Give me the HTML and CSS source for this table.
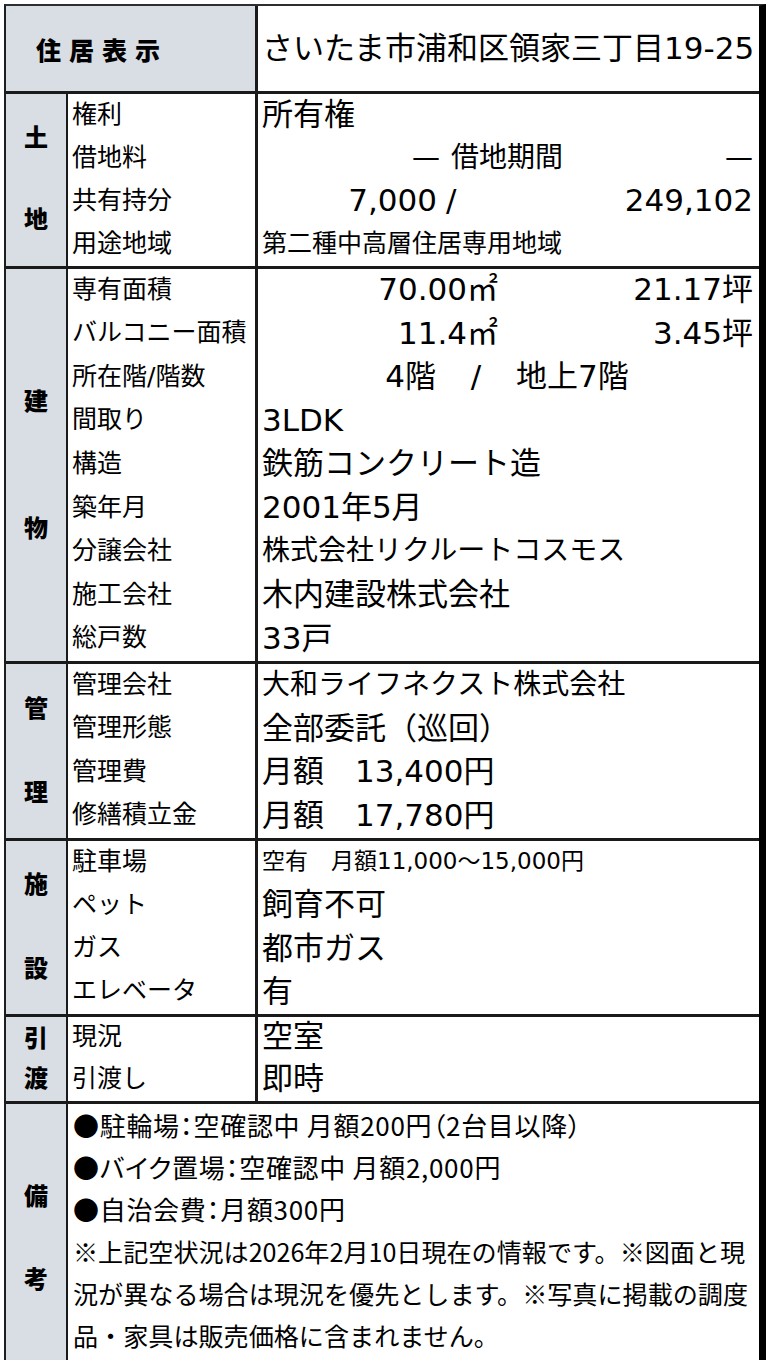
FILE: index.html
```html
<!DOCTYPE html>
<html lang="ja">
<head>
<meta charset="utf-8">
<title>物件概要</title>
<link rel="stylesheet" href="styles.css">
</head>
<body>
<div class="sheet">
  <div class="head">
    <div class="head-label">住居表示</div>
    <div class="head-value">さいたま市浦和区領家三丁目19-25</div>
  </div>

  <section class="sec sec-land">
    <div class="cat cat-land"><span>土</span><span>地</span></div>
    <div class="rows">
      <div class="row"><div class="lbl">権利</div><div class="val">所有権</div></div>
      <div class="row"><div class="lbl">借地料</div>
        <div class="val split split-lease"><span class="r">—</span><span class="lease-label">借地期間</span><span class="r">—</span></div>
      </div>
      <div class="row"><div class="lbl">共有持分</div>
        <div class="val split split-share"><span class="r">7,000</span><span class="slash">/</span><span class="r">249,102</span></div>
      </div>
      <div class="row"><div class="lbl">用途地域</div><div class="val val-s">第二種中高層住居専用地域</div></div>
    </div>
  </section>

  <section class="sec sec-bldg">
    <div class="cat cat-bldg"><span>建</span><span>物</span></div>
    <div class="rows">
      <div class="row"><div class="lbl">専有面積</div>
        <div class="val split split-area"><span class="r">70.00㎡</span><span class="r">21.17坪</span></div>
      </div>
      <div class="row"><div class="lbl">バルコニー面積</div>
        <div class="val split split-area"><span class="r">11.4㎡</span><span class="r">3.45坪</span></div>
      </div>
      <div class="row"><div class="lbl">所在階/階数</div>
        <div class="val split split-floor"><span class="r">4階</span><span class="c">/</span><span>地上7階</span></div>
      </div>
      <div class="row"><div class="lbl">間取り</div><div class="val">3LDK</div></div>
      <div class="row"><div class="lbl">構造</div><div class="val">鉄筋コンクリート造</div></div>
      <div class="row"><div class="lbl">築年月</div><div class="val">2001年5月</div></div>
      <div class="row"><div class="lbl">分譲会社</div><div class="val val-m">株式会社リクルートコスモス</div></div>
      <div class="row"><div class="lbl">施工会社</div><div class="val">木内建設株式会社</div></div>
      <div class="row"><div class="lbl">総戸数</div><div class="val">33戸</div></div>
    </div>
  </section>

  <section class="sec sec-mgmt">
    <div class="cat cat-mgmt"><span>管</span><span>理</span></div>
    <div class="rows">
      <div class="row"><div class="lbl">管理会社</div><div class="val val-m">大和ライフネクスト株式会社</div></div>
      <div class="row"><div class="lbl">管理形態</div><div class="val">全部委託（巡回）</div></div>
      <div class="row"><div class="lbl">管理費</div><div class="val">月額　13,400円</div></div>
      <div class="row"><div class="lbl">修繕積立金</div><div class="val">月額　17,780円</div></div>
    </div>
  </section>

  <section class="sec sec-fac">
    <div class="cat cat-fac"><span>施</span><span>設</span></div>
    <div class="rows">
      <div class="row"><div class="lbl">駐車場</div><div class="val val-xs">空有　月額11,000～15,000円</div></div>
      <div class="row"><div class="lbl">ペット</div><div class="val">飼育不可</div></div>
      <div class="row"><div class="lbl">ガス</div><div class="val">都市ガス</div></div>
      <div class="row"><div class="lbl">エレベータ</div><div class="val">有</div></div>
    </div>
  </section>

  <section class="sec sec-hand">
    <div class="cat cat-hand"><span>引</span><span>渡</span></div>
    <div class="rows">
      <div class="row"><div class="lbl">現況</div><div class="val">空室</div></div>
      <div class="row"><div class="lbl">引渡し</div><div class="val">即時</div></div>
    </div>
  </section>

  <section class="sec sec-note">
    <div class="cat cat-note"><span>備</span><span>考</span></div>
    <div class="note">
      <div class="bul">●駐輪場：空確認中 月額200円（2台目以降）</div>
      <div class="bul">●バイク置場：空確認中 月額2,000円</div>
      <div class="bul">●自治会費：月額300円</div>
      <p class="para">※上記空状況は2026年2月10日現在の情報です。※図面と現<br>況が異なる場合は現況を優先とします。※写真に掲載の調度<br>品・家具は販売価格に含まれません。</p>
    </div>
  </section>
</div>
</body>
</html>
```

FILE: styles.css
```css
* { box-sizing: border-box; }

html, body {
  margin: 0;
  padding: 0;
  background: #ffffff;
}

.sheet {
  margin: 4px 0 0 4px;
  width: 762px;
  border-top: 2px solid #2e2e2e;
  border-left: 2px solid #1e1e1e;
  border-right: 7px solid #000000;
  font-family: "DejaVu Sans", "Noto Sans CJK JP", sans-serif;
  line-height: 1.2;
  color: #000000;
}

/* header row */
.head {
  display: grid;
  grid-template-columns: 252px 1fr;
  grid-template-rows: minmax(0, 1fr);
  height: 88px;
  border-bottom: 3px solid #1a1a1a;
}

.head-label {
  background: #d9dde4;
  border-right: 3px solid #1a1a1a;
  display: flex;
  align-items: center;
  padding-left: 30px;
  font-family: "Noto Sans CJK JP", sans-serif;
  font-weight: 900;
  font-size: 25px;
  letter-spacing: 8px;
}

.head-value {
  display: flex;
  align-items: center;
  padding-left: 4px;
  font-size: 31px;
  white-space: nowrap;
}

/* sections */
.sec {
  display: grid;
  grid-template-columns: 62px 1fr;
  grid-template-rows: minmax(0, 1fr);
  border-bottom: 3px solid #1a1a1a;
}

.sec-land { height: 175px; }
.sec-bldg { height: 395px; }
.sec-mgmt { height: 177px; }
.sec-fac  { height: 176px; }
.sec-hand { height: 87px; }

.cat {
  background: #d9dde4;
  border-right: 2px solid #1a1a1a;
  display: flex;
  flex-direction: column;
  align-items: center;
  justify-content: center;
  font-family: "Noto Sans CJK JP", sans-serif;
  font-weight: 900;
  font-size: 24px;
  line-height: 24px;
}

.cat-land { gap: 58px; padding-bottom: 6px; }
.cat-bldg { gap: 103px; padding-bottom: 4px; }
.cat-mgmt { gap: 60px; padding-bottom: 4px; }
.cat-fac  { gap: 60px; padding-bottom: 6px; }
.cat-hand { gap: 16px; padding-bottom: 4px; }
.cat-note { gap: 59px; justify-content: flex-start; padding-top: 79px; }

.rows {
  display: grid;
  grid-auto-rows: minmax(0, 1fr);
  min-height: 0;
}

.row {
  display: grid;
  grid-template-columns: 190px 1fr;
  min-height: 0;
}

.lbl {
  border-right: 3px solid #1a1a1a;
  display: flex;
  align-items: center;
  padding-left: 4px;
  padding-bottom: 2px;
  font-size: 25px;
  white-space: nowrap;
}

.val {
  display: flex;
  align-items: center;
  padding: 0 6px 2px 4px;
  font-size: 31px;
  white-space: nowrap;
}

.val-m { font-size: 28px; }
.val-s { font-size: 25px; }
.val-xs { font-size: 23px; }

.split {
  display: grid;
  align-items: center;
}

.split .r { text-align: right; }
.split .c { text-align: center; }

.split-lease {
  grid-template-columns: 178px 1fr auto;
  font-size: 28px;
}
.lease-label { padding-left: 11px; }

.split-share {
  grid-template-columns: 175px auto 1fr;
}
.slash { padding-left: 9px; }

.split-area {
  grid-template-columns: 236px 1fr;
}

.split-floor {
  grid-template-columns: 174px 80px 1fr;
}

/* remarks */
.note {
  padding: 0 4px 12px 5px;
  font-family: "Noto Sans CJK JP", sans-serif;
  font-size: 26px;
  line-height: 42px;
}

.bul {
  font-feature-settings: "palt";
  letter-spacing: 0.7px;
  white-space: nowrap;
}

.para {
  margin: 0;
  font-size: 25.1px;
  white-space: nowrap;
}
```
